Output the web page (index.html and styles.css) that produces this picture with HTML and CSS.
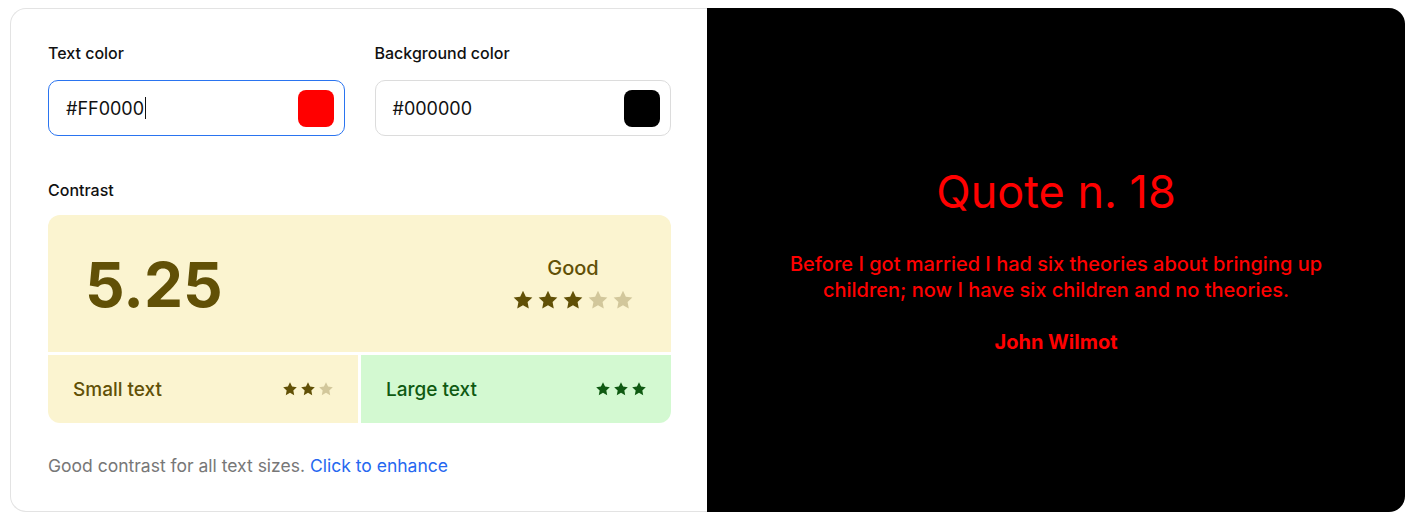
FILE: index.html
```html
<!DOCTYPE html>
<html>
<head>
<meta charset="utf-8">
<link rel="stylesheet" href="styles.css">
</head>
<body>
<div class="card">
  <section class="editor">
    <div class="fields">
      <div class="field">
        <label class="label">Text color</label>
        <div class="input focused">
          <span class="value">#FF0000<span class="caret"></span></span>
          <span class="swatch red"></span>
        </div>
      </div>
      <div class="field">
        <label class="label">Background color</label>
        <div class="input">
          <span class="value">#000000</span>
          <span class="swatch black"></span>
        </div>
      </div>
    </div>
    <div class="label contrast-label">Contrast</div>
    <div class="contrast">
      <div class="score">
        <div class="ratio">5.25</div>
        <div class="rating">
          <div class="rating-text">Good</div>
          <div class="stars big">
            <svg viewBox="0 0 24 24"><path class="on" d="M12 1.8l3.1 6.6 7.1.9-5.2 4.9 1.3 7.1L12 17.8l-6.3 3.5 1.3-7.1-5.2-4.9 7.1-.9z"/></svg>
            <svg viewBox="0 0 24 24"><path class="on" d="M12 1.8l3.1 6.6 7.1.9-5.2 4.9 1.3 7.1L12 17.8l-6.3 3.5 1.3-7.1-5.2-4.9 7.1-.9z"/></svg>
            <svg viewBox="0 0 24 24"><path class="on" d="M12 1.8l3.1 6.6 7.1.9-5.2 4.9 1.3 7.1L12 17.8l-6.3 3.5 1.3-7.1-5.2-4.9 7.1-.9z"/></svg>
            <svg viewBox="0 0 24 24"><path class="off" d="M12 1.8l3.1 6.6 7.1.9-5.2 4.9 1.3 7.1L12 17.8l-6.3 3.5 1.3-7.1-5.2-4.9 7.1-.9z"/></svg>
            <svg viewBox="0 0 24 24"><path class="off" d="M12 1.8l3.1 6.6 7.1.9-5.2 4.9 1.3 7.1L12 17.8l-6.3 3.5 1.3-7.1-5.2-4.9 7.1-.9z"/></svg>
          </div>
        </div>
      </div>
      <div class="sizes">
        <div class="size yellow">
          <span>Small text</span>
          <div class="stars small">
            <svg viewBox="0 0 24 24"><path class="on" d="M12 1.8l3.1 6.6 7.1.9-5.2 4.9 1.3 7.1L12 17.8l-6.3 3.5 1.3-7.1-5.2-4.9 7.1-.9z"/></svg>
            <svg viewBox="0 0 24 24"><path class="on" d="M12 1.8l3.1 6.6 7.1.9-5.2 4.9 1.3 7.1L12 17.8l-6.3 3.5 1.3-7.1-5.2-4.9 7.1-.9z"/></svg>
            <svg viewBox="0 0 24 24"><path class="off" d="M12 1.8l3.1 6.6 7.1.9-5.2 4.9 1.3 7.1L12 17.8l-6.3 3.5 1.3-7.1-5.2-4.9 7.1-.9z"/></svg>
          </div>
        </div>
        <div class="size green">
          <span>Large text</span>
          <div class="stars small">
            <svg viewBox="0 0 24 24"><path d="M12 1.8l3.1 6.6 7.1.9-5.2 4.9 1.3 7.1L12 17.8l-6.3 3.5 1.3-7.1-5.2-4.9 7.1-.9z"/></svg>
            <svg viewBox="0 0 24 24"><path d="M12 1.8l3.1 6.6 7.1.9-5.2 4.9 1.3 7.1L12 17.8l-6.3 3.5 1.3-7.1-5.2-4.9 7.1-.9z"/></svg>
            <svg viewBox="0 0 24 24"><path d="M12 1.8l3.1 6.6 7.1.9-5.2 4.9 1.3 7.1L12 17.8l-6.3 3.5 1.3-7.1-5.2-4.9 7.1-.9z"/></svg>
          </div>
        </div>
      </div>
    </div>
    <p class="note">Good contrast for all text sizes. <a class="link" href="#">Click to enhance</a></p>
  </section>
  <section class="preview">
    <h1 class="title">Quote n. 18</h1>
    <p class="quote">Before I got married I had six theories about bringing up children; now I have six children and no theories.</p>
    <p class="author">John Wilmot</p>
  </section>
</div>
</body>
</html>
```

FILE: styles.css
```css
* { box-sizing: border-box; }
html, body { margin: 0; padding: 0; background: #fff; }
body { font-family: Inter, "Liberation Sans", sans-serif; }

.card {
  display: flex;
  width: 1395px;
  height: 504px;
  margin: 8px 0 0 10px;
}

.editor {
  flex: 0 0 697px;
  border: 1px solid #e3e3e3;
  border-right: none;
  border-radius: 16px 0 0 16px;
  padding: 34px 36px 0 37px;
}

.fields {
  display: flex;
  gap: 30px;
}
.field { flex: 1; }

.label {
  display: block;
  font-size: 16px;
  line-height: 21px;
  font-weight: 500;
  color: #111;
  margin-bottom: 16px;
}

.input {
  height: 56px;
  border: 1px solid #dcdcdc;
  border-radius: 10px;
  display: flex;
  align-items: center;
  justify-content: space-between;
  padding: 0 10px 0 17px;
}
.input.focused { border-color: #2a74f0; }
.value {
  font-size: 18px;
  color: #111;
  display: flex;
  align-items: center;
}
.caret {
  display: inline-block;
  width: 1px;
  height: 22px;
  background: #111;
  margin-left: 1px;
}
.swatch {
  width: 36px;
  height: 37px;
  border-radius: 8px;
}
.swatch.red { background: #ff0000; }
.swatch.black { background: #000; }

.contrast-label {
  margin-top: 44px;
  margin-bottom: 14px;
}

.contrast {
  border-radius: 12px;
  overflow: hidden;
  display: flex;
  flex-direction: column;
  gap: 3px;
  background: #fff;
}
.score {
  height: 137px;
  background: #fbf4d0;
  display: flex;
  align-items: center;
  justify-content: space-between;
  padding: 0 37px 0 37px;
}
.ratio {
  font-size: 62px;
  font-weight: 700;
  color: #615006;
  line-height: 1;
  margin-top: 2px;
}
.rating {
  display: flex;
  flex-direction: column;
  align-items: center;
  gap: 9px;
}
.rating-text {
  font-size: 20px;
  line-height: 24px;
  font-weight: 500;
  color: #615006;
}
.stars { display: flex; }
.stars.big { gap: 3px; }
.stars.big svg { width: 22px; height: 22px; }
.stars.small { gap: 2px; }
.stars.small svg { width: 16px; height: 16px; }
.yellow .stars path.on, .score path.on { fill: #615006; }
.yellow .stars path.off, .score path.off { fill: #d2c79b; }
.green .stars path { fill: #0f5a12; }

.sizes {
  display: flex;
  gap: 3px;
}
.size {
  flex: 1;
  height: 68px;
  display: flex;
  align-items: center;
  justify-content: space-between;
  padding: 0 24px 0 25px;
  font-size: 19px;
  font-weight: 500;
}
.size.yellow { background: #fbf4d0; color: #615006; }
.size.green { background: #d3f9d1; color: #0f5a12; }

.note {
  margin: 31px 0 0 0;
  font-size: 17.5px;
  line-height: 24px;
  color: #777;
}
.link { color: #2567f0; text-decoration: none; }

.preview {
  flex: 1;
  background: #000;
  border-radius: 0 16px 16px 0;
  display: flex;
  flex-direction: column;
  align-items: center;
  justify-content: center;
  text-align: center;
  color: #ff0000;
  font-family: Inter, "Liberation Sans", sans-serif;
  padding-bottom: 2px;
}
.title {
  margin: 0;
  font-size: 45px;
  font-weight: 400;
  line-height: 58px;
}
.quote {
  margin: 30px 0 0 0;
  max-width: 560px;
  font-size: 20px;
  font-weight: 500;
  line-height: 26px;
}
.author {
  margin: 26px 0 0 0;
  font-size: 20px;
  font-weight: 700;
  line-height: 26px;
}
```
